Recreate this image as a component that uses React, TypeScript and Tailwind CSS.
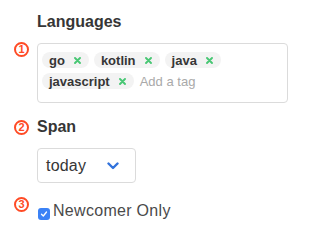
import React from 'react';

const TAGS = ['go', 'kotlin', 'java', 'javascript'];

function Circled({ n }: { n: number }) {
  return (
    <span className="w-[15px] h-[15px] shrink-0 rounded-full border-2 border-[#ff4b26] text-[#ff4b26] flex items-center justify-center text-[11px] font-bold leading-none">
      {n}
    </span>
  );
}

function Tag({ label }: { label: string }) {
  return (
    <span className="h-[16px] flex items-center rounded-full bg-[#f3f3f3] pl-[7px] pr-[8px] text-[13px] font-bold leading-none text-[#363636]">
      {label}
      <svg className="ml-[9px]" width="7" height="7" viewBox="0 0 7 7">
        <path d="M1 1L6 6M6 1L1 6" stroke="#48c774" strokeWidth="1.9" strokeLinecap="round" />
      </svg>
    </span>
  );
}

export default function App() {
  return (
    <div
      className="w-[320px] h-[247px] bg-white pt-[10px] pl-[14px] flex flex-col"
      style={{ fontFamily: '"Liberation Sans", Arial, sans-serif' }}
    >
      {/* Languages */}
      <div className="ml-[23px] h-[24px] leading-[24px] text-[16px] font-bold text-[#363636]">Languages</div>
      <div className="mt-[9px] flex items-start gap-[8px]">
        <div className="-mt-[1px]">
          <Circled n={1} />
        </div>
        <div className="w-[251px] h-[60px] border border-[#dbdbdb] rounded-[4px] pt-[8px] pl-[4px] pr-[4px]">
          <div className="flex flex-wrap items-center gap-x-[5px] gap-y-[5px]">
            {TAGS.map((t) => (
              <Tag key={t} label={t} />
            ))}
            <span className="ml-[1px] text-[13px] leading-none text-[#a9a9a9]">Add a tag</span>
          </div>
        </div>
      </div>

      {/* Span */}
      <div className="mt-[12px] flex items-center gap-[8px] h-[24px]">
        <Circled n={2} />
        <span className="leading-[24px] text-[16px] font-bold text-[#363636]">Span</span>
      </div>
      <div className="ml-[23px] mt-[9px] w-[99px] h-[35px] border border-[#dbdbdb] rounded-[4px] flex items-center justify-between pl-[8px] pr-[16px]">
        <span className="text-[16px] tracking-[0.2px] text-[#363636]">today</span>
        <svg width="12" height="8" viewBox="0 0 12 8">
          <path d="M1.5 1.5L6 6L10.5 1.5" stroke="#3273dc" strokeWidth="2.4" fill="none" strokeLinecap="round" strokeLinejoin="round" />
        </svg>
      </div>

      {/* Newcomer */}
      <div className="mt-[14px] flex items-start gap-[8px]">
        <Circled n={3} />
        <label className="mt-[2px] h-[24px] flex items-center">
          <span className="ml-[1px] mt-[5px] w-[12px] h-[12px] rounded-[3px] bg-[#3b82f6] flex items-center justify-center">
            <svg width="8" height="8" viewBox="0 0 8 8">
              <path d="M1.5 4.2L3.3 6L6.5 2" stroke="white" strokeWidth="1.3" fill="none" strokeLinecap="round" strokeLinejoin="round" />
            </svg>
          </span>
          <span className="ml-[3px] text-[16px] tracking-[0.3px] leading-[24px] text-[#4a4a4a]">Newcomer Only</span>
        </label>
      </div>
    </div>
  );
}
